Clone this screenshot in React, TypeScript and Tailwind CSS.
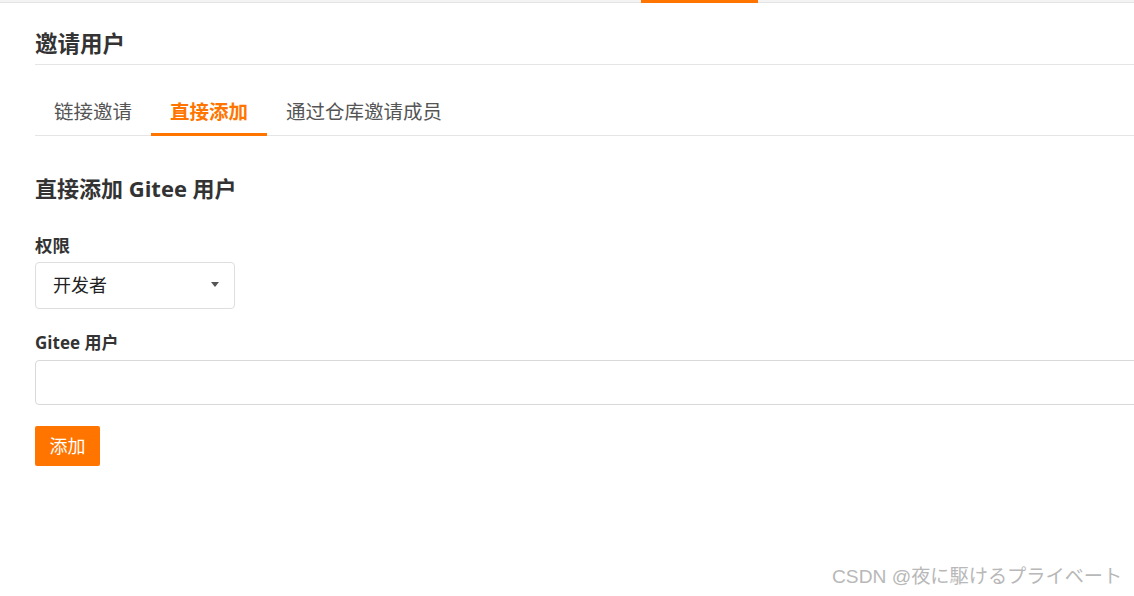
import { useState } from "react";

const font = { fontFamily: '"Open Sans", "Noto Sans CJK SC", sans-serif' };

const App = () => {
  const [tab, setTab] = useState<number>(1);
  const tabs = ["链接邀请", "直接添加", "通过仓库邀请成员"];

  return (
    <div className="w-[1134px] h-[596px] bg-white overflow-hidden relative text-[#333]" style={font}>
      <div className="h-[3px] bg-[#f3f3f3] border-b border-[#e3e3e3] flex">
        <div className="ml-[641px] w-[117px] h-[3px] bg-[#ff7500]" />
      </div>

      <div className="pl-[35px]">
        <h2 className="pt-[29px] pb-[8px] text-[22.5px] leading-[24px] font-bold border-b border-[#e5e5e5]">
          邀请用户
        </h2>

        <nav className="flex mt-[14px] border-b border-[#e5e5e5] h-[57px]">
          {tabs.map((t, i) => (
            <button
              key={t}
              onClick={() => setTab(i)}
              className={
                i === tab
                  ? "px-[19px] text-[19.5px] leading-[24px] pt-[11px] self-stretch font-bold text-[#ff7500] border-b-[3px] border-[#ff7500] -mb-px"
                  : "px-[19px] text-[19.5px] leading-[24px] pt-[11px] self-stretch text-[#555] border-b-[3px] border-transparent -mb-px"
              }
            >
              {t}
            </button>
          ))}
        </nav>

        <h3 className="mt-[38px] text-[22px] leading-[28px] font-bold">直接添加 Gitee 用户</h3>

        <label className="block mt-[32px] text-[17.5px] leading-[22px] font-bold">权限</label>
        <div className="mt-[6px] w-[200px] h-[47px] border border-[#dedede] rounded-[4px] flex items-center justify-between pl-[17px] pr-[15px]">
          <span className="text-[18px] text-[#222]">开发者</span>
          <span className="w-0 h-0 border-l-[4px] border-r-[4px] border-t-[5px] border-l-transparent border-r-transparent border-t-[#555] mb-[2px]" />
        </div>

        <label className="block mt-[23px] text-[17px] leading-[22px] font-bold">Gitee 用户</label>
        <input className="block mt-[6px] w-[1110px] h-[45px] border border-[#d9d9d9] rounded-[4px] outline-none" />

        <button className="mt-[21px] w-[65px] h-[40px] bg-[#ff7500] text-white text-[18px] rounded-[2px]">
          添加
        </button>
      </div>

      <div
        className="absolute left-[832px] top-[566px] text-[19.2px] leading-[22px] text-[#b8b8b8]"
        style={{ fontFamily: '"Liberation Sans", "Noto Sans CJK JP", sans-serif' }}
      >
        CSDN @夜に駆けるプライベート
      </div>
    </div>
  );
};

export default App;
